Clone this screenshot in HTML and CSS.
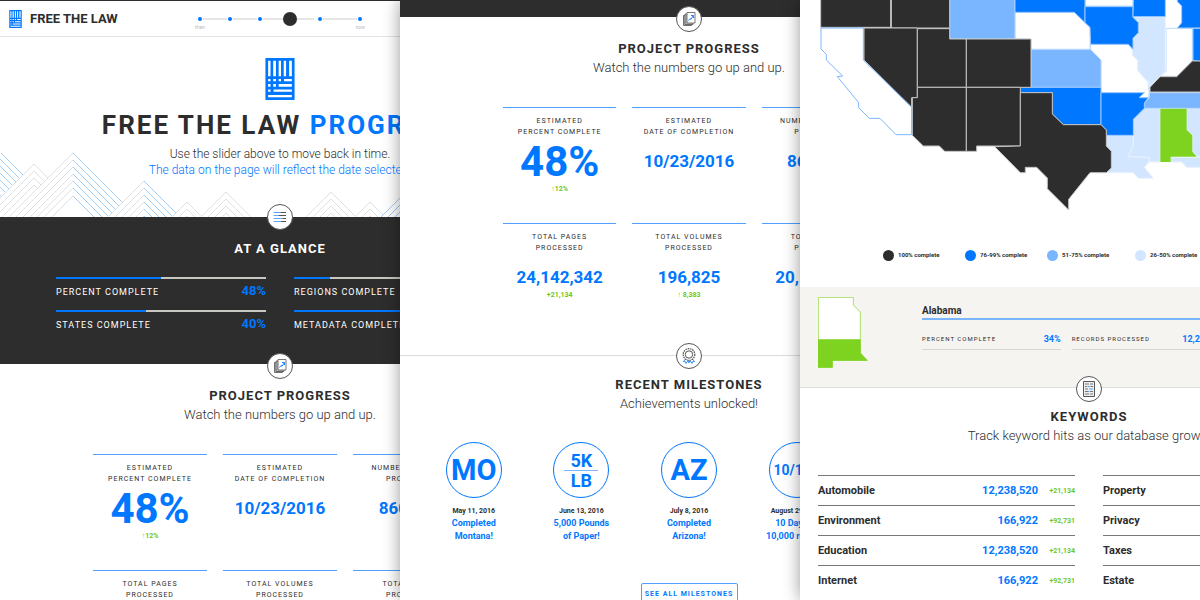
FILE: index.html
```html
<!DOCTYPE html>
<html lang="en">
<head>
<meta charset="utf-8">
<title>Free the Law</title>
<link rel="stylesheet" href="styles.css">
</head>
<body>
<svg class="defs" aria-hidden="true">
  <symbol id="emblem" viewBox="0 0 86 124">
    <rect width="86" height="124" fill="#07f"/>
    <path fill="#fff" d="M8 8h7v46H8zM23 8h8v46h-8zM39 8h7v46h-7zM54 8h7v46h-7zM70 8h8v46h-8zM8 62h7v7H8zM23 62h8v7h-8zM39 62h7v7h-7zM55 62h23v7H55zM8 77h7v8H8zM23 77h8v8h-8zM39 77h39v8H39zM8 93h7v7H8zM24 93h54v7H24zM8 109h70v7H8z"/>
  </symbol>
  <symbol id="pages" viewBox="0 0 26 26">
    <g fill="#bbb" stroke="#555" stroke-width=".8"><path d="M7.5 9.5h8v10h-8z"/><path d="M9 8h8v10.500H9z"/><path fill="#fff" d="M11 6.500h8v10.500h-8z"/></g>
    <path d="M12.500 14.500l1.500-2 1 .8 2.300-3.500M15 9.500h2.500V12" fill="none" stroke="#07f" stroke-width=".9"/>
  </symbol>
  <symbol id="chevrons-left" viewBox="-70 0 140 70">
    <path d="M0 0l-70 70M0 7l-63 63M0 14l-56 56M0 21l-49 49M0 28l-42 42M0 35l-35 35M0 43l-27 27"/>
  </symbol>
  <symbol id="chevrons-right" viewBox="-70 0 140 70">
    <path d="M0 0l70 70M0 7l63 63M0 14l56 56M0 21l49 49M0 28l42 42M0 35l35 35M0 43l27 27"/>
  </symbol>
</svg>

<main class="board">
  <div class="panel">
    <div class="page page-home">
      <header class="topbar">
        <a class="brand" href="#"><svg class="brand-mark" aria-hidden="true"><use href="#emblem"/></svg>FREE THE LAW</a>
        <div class="timeline">
          <svg class="timeline-dots" viewBox="0 0 174 14" aria-hidden="true">
            <path d="M10 7h24M40 7h24M70 7h51M130 7h34" stroke="#ccc"/>
            <g fill="#07f"><circle cx="7" cy="7" r="2"/><circle cx="37" cy="7" r="2"/><circle cx="67" cy="7" r="2"/><circle cx="127" cy="7" r="2"/><circle cx="167" cy="7" r="2"/></g>
          </svg>
          <input type="range" min="0" max="160" value="90" aria-label="Date">
          <div class="timeline-ends"><span>then</span><span>now</span></div>
        </div>
      </header>

      <div class="hero">
        <svg class="hero-mark" aria-hidden="true"><use href="#emblem"/></svg>
        <h1>FREE THE LAW <span>PROGRESS</span></h1>
        <p>Use the slider above to move back in time.<br><span>The data on the page will reflect the date selected.</span></p>
        <svg class="mountains" viewBox="0 0 560 64" preserveAspectRatio="xMinYMax slice" aria-hidden="true">
          <g class="far"><use href="#chevrons-right" x="-80" y="-11" width="140" height="70"/><use href="#chevrons-right" x="-80" y="37" width="140" height="70"/></g>
          <path class="mask" d="M34 11l60 60h-120z"/>
          <g class="near"><use href="#chevrons-left" x="-36" y="11" width="140" height="70"/><use href="#chevrons-right" x="-36" y="11" width="140" height="70"/></g>
          <path class="mask" d="M73 0l70 70H3z"/>
          <g class="near"><use href="#chevrons-left" x="3" y="0" width="140" height="70"/></g>
          <g class="far"><use href="#chevrons-right" x="3" y="0" width="140" height="70"/></g>
          <path class="mask" d="M144 28l42 42h-84z"/>
          <g class="near"><use href="#chevrons-left" x="74" y="28" width="140" height="70"/></g>
          <g class="far"><use href="#chevrons-right" x="74" y="28" width="140" height="70"/></g>
          <path class="mask" d="M187 49l20 20h-40z"/>
          <g class="near"><use href="#chevrons-left" x="117" y="49" width="140" height="70"/><use href="#chevrons-right" x="117" y="49" width="140" height="70"/></g>
          <path class="mask" d="M226 39l30 30h-60z"/>
          <g class="near"><use href="#chevrons-left" x="156" y="39" width="140" height="70"/><use href="#chevrons-right" x="156" y="39" width="140" height="70"/></g>
          <g class="near"><use href="#chevrons-left" x="261" y="39" width="140" height="70"/><use href="#chevrons-right" x="261" y="39" width="140" height="70"/></g>
          <path class="mask" d="M370 49l20 20h-40z"/>
          <g class="near"><use href="#chevrons-left" x="300" y="49" width="140" height="70"/><use href="#chevrons-right" x="300" y="49" width="140" height="70"/></g>
          <path class="mask" d="M422 23l45 45h-90z"/>
          <g class="far"><use href="#chevrons-left" x="352" y="23" width="140" height="70"/><use href="#chevrons-right" x="352" y="23" width="140" height="70"/></g>
        </svg>
      </div>

      <section class="section glance">
        <svg class="badge" viewBox="0 0 26 26" aria-hidden="true"><circle cx="13" cy="13" r="12.500"/><path d="M6.500 8.500h7M6.500 11.500h5M6.500 14.500h9M6.500 17.500h7" stroke="#5aa7ff"/><path d="M13.500 8.500h5.500M11.500 11.500H19M15.500 14.500H19M13.500 17.500H19" stroke="#555"/></svg>
        <h2>AT A GLANCE</h2>
        <div class="meters">
          <div class="meter"><div class="bar"><div style="width:50%"></div></div><div class="meter-row"><span>PERCENT COMPLETE</span><strong>48%</strong></div></div>
          <div class="meter"><div class="bar"><div style="width:17%"></div></div><div class="meter-row"><span>REGIONS COMPLETE</span><strong>17%</strong></div></div>
          <div class="meter"><div class="bar"><div style="width:43%"></div></div><div class="meter-row"><span>STATES COMPLETE</span><strong>40%</strong></div></div>
          <div class="meter"><div class="bar"><div style="width:70%"></div></div><div class="meter-row"><span>METADATA COMPLETE</span><strong>70%</strong></div></div>
        </div>
      </section>

      <section class="section progress">
        <svg class="badge" viewBox="0 0 26 26" aria-hidden="true"><circle cx="13" cy="13" r="12.500"/><use href="#pages"/></svg>
        <h2>PROJECT PROGRESS</h2>
        <p class="lead">Watch the numbers go up and up.</p>
        <div class="stats">
          <div class="stat"><h3>ESTIMATED<br>PERCENT COMPLETE</h3><strong class="huge">48%</strong><span class="delta">↑12%</span></div>
          <div class="stat"><h3>ESTIMATED<br>DATE OF COMPLETION</h3><strong>10/23/2016</strong></div>
          <div class="stat"><h3>NUMBER OF CASES<br>PROCESSED</h3><strong>860,241</strong><span class="delta">↑8,383</span></div>
          <div class="stat"><h3>TOTAL PAGES<br>PROCESSED</h3></div>
          <div class="stat"><h3>TOTAL VOLUMES<br>PROCESSED</h3></div>
          <div class="stat"><h3>TOTAL CASES<br>PROCESSED</h3></div>
        </div>
      </section>
    </div>
  </div>

  <div class="panel">
    <div class="page">
      <div class="strip"></div>
      <section class="section progress">
        <svg class="badge" viewBox="0 0 26 26" aria-hidden="true"><circle cx="13" cy="13" r="12.500"/><use href="#pages"/></svg>
        <h2>PROJECT PROGRESS</h2>
        <p class="lead">Watch the numbers go up and up.</p>
        <div class="stats">
          <div class="stat"><h3>ESTIMATED<br>PERCENT COMPLETE</h3><strong class="huge">48%</strong><span class="delta">↑12%</span></div>
          <div class="stat"><h3>ESTIMATED<br>DATE OF COMPLETION</h3><strong>10/23/2016</strong></div>
          <div class="stat"><h3>NUMBER OF CASES<br>PROCESSED</h3><strong>860,241</strong></div>
          <div class="stat"><h3>TOTAL PAGES<br>PROCESSED</h3><strong>24,142,342</strong><span class="delta">+21,134</span></div>
          <div class="stat"><h3>TOTAL VOLUMES<br>PROCESSED</h3><strong>196,825</strong><span class="delta">↑ 8,383</span></div>
          <div class="stat"><h3>TOTAL CASES<br>PROCESSED</h3><strong>20,142,342</strong></div>
        </div>
      </section>

      <section class="section ruled">
        <svg class="badge" viewBox="0 0 26 26" aria-hidden="true"><circle cx="13" cy="13" r="12.500"/><path d="M9.500 16l-2 2.500 2 .2.500 1.800 2-3M16.500 16l2 2.500-2 .2-.5 1.800-2-3M12.500 18l.5 2 .5-2" fill="none" stroke="#07f" stroke-width=".8"/><circle cx="13" cy="11.500" r="5.800" stroke="#555" stroke-width="1.200" stroke-dasharray="1.600 .7"/><circle cx="13" cy="11.500" r="3.700" stroke="#555"/></svg>
        <h2>RECENT MILESTONES</h2>
        <p class="lead">Achievements unlocked!</p>
        <ul class="milestones">
          <li><div class="medal">MO</div><time>May 11, 2016</time><a href="#">Completed<br>Montana!</a></li>
          <li><div class="medal medal-split"><span>5K</span><span>LB</span></div><time>June 13, 2016</time><a href="#">5,000 Pounds<br>of Paper!</a></li>
          <li><div class="medal">AZ</div><time>July 8, 2016</time><a href="#">Completed<br>Arizona!</a></li>
          <li><div class="medal medal-small">10/10K</div><time>August 29, 2016</time><a href="#">10 Days of<br>10,000 records</a></li>
        </ul>
        <button class="more" type="button">SEE ALL MILESTONES</button>
      </section>
    </div>
  </div>

  <div class="panel">
    <div class="page">
      <svg class="map" viewBox="0 0 1734 660" role="img" aria-label="Map of completion by state">
        <g class="none"><path d="M872 133H985L997 148V165L1013 180V212L1045 246V262L1048 278 1045 293H1015L1033 278H903V180L872 148Z"/><path d="M645 37H823L870 82V148H693V117H645Z"/><path d="M857-5H999V18H857ZM1098 85H1177V183L1130 229H1080L1098 213Z"/></g>
        <g class="pale"><path d="M999 52H1096V212L1048 262 1046 246 1013 212V180L997 165V148L999 115 1015 98V68Z"/><path d="M919 406H1000V438L985 470 1048 472V485L1033 502 1060 535H1015L1000 518H919L934 504V454L919 438Z"/><path d="M1033 325H1081V486H1048V472L985 470 1000 438V358Z"/><path d="M1160 326H1300V470H1190L1177 455V406L1160 390ZM1112 472H1300V502H1160L1145 486H1112Z"/></g>
        <g class="mid"><path d="M449-5H645V117H449Z"/><path d="M693 148H871L903 180V262H693Z"/><path d="M1048 278H1300V325H1033V309L1048 294Z"/></g>
        <g class="high"><path d="M661 262H903V374H790L757 342V278H661Z"/><path d="M645-5H855V68L823 37H645Z"/><path d="M855 20H999V52L1015 68V98L999 115V148L985 133H872L870 82 855 68Z"/><path d="M1000-5H1096V50H999ZM1132-5V5L1145 18V68L1132 84H1300V-5ZM1179 85H1300V190L1179 182Z"/><path d="M903 278H1033L1017 293H1045L1033 309V325L1000 358V406H919V390L903 374Z"/></g>
        <g class="full"><path d="M62-5H272V82H62ZM274-5H449V84H274Z"/><path d="M192 84H352V293H335V322L192 180Z"/><path d="M352 86H449V117H499V262H352Z"/><path d="M499 117H693V262H499Z"/><path d="M352 262H499V454H434L418 438H370L337 406V293H352Z"/><path d="M499 262H661V438H530V454H499Z"/><path d="M661 278H757V342L790 374H903L919 390V438L934 454V504L919 518H870L806 598V630L742 566V534L710 502H676V518H661L584 440 661 438Z"/><path d="M1050 276V262L1080 230H1130L1177 183H1195L1300 200V276Z"/></g>
        <path class="open" d="M63 84H190V180L335 322V404H288L240 355H208L176 323V308L112 230 128 228 79 180V163L63 147Z"/>
        <path fill="#7ed321" d="M1081 326H1160V390L1177 406V455L1190 470H1112V486H1081Z"/>
      </svg>
      <ul class="legend">
        <li><i class="dot-full"></i>100% complete</li>
        <li><i class="dot-high"></i>76-99% complete</li>
        <li><i class="dot-mid"></i>51-75% complete</li>
        <li><i class="dot-pale"></i>26-50% complete</li>
      </ul>

      <div class="state">
        <svg class="state-shape" viewBox="54 186 150 213" aria-hidden="true"><path d="M55 187H160V210L181 231V354L202 376H97V397H55Z" fill="#fff" stroke="#a5e065" stroke-width="3"/><path d="M54 313H182V354L203 377H98V398H54Z" fill="#7ed321"/></svg>
        <div class="state-info">
          <h3>Alabama</h3>
          <dl>
            <div><dt>PERCENT COMPLETE</dt><dd>34%</dd></div>
            <div><dt>RECORDS PROCESSED</dt><dd>12,238</dd></div>
          </dl>
        </div>
      </div>

      <section class="section ruled keywords">
        <svg class="badge" viewBox="0 0 26 26" aria-hidden="true"><circle cx="13" cy="13" r="12.500"/><path d="M7.500 5.500h11v15h-11z" fill="#eee" stroke="#555"/><path d="M9 8h4M14 8h3M9 10.500h2M14.500 10.500H17M9 13h3M9 15.500h3M14 15.500h3M9 18h4M14 18h3" stroke="#777"/><path d="M11.500 10.500h2.500M13 13h4M12 15.500h1.500" stroke="#5aa7ff"/></svg>
        <h2>KEYWORDS</h2>
        <p class="lead">Track keyword hits as our database grows.</p>
        <div class="tables">
          <table>
            <tr><th scope="row">Automobile</th><td>12,238,520</td><td class="delta">+21,134</td></tr>
            <tr><th scope="row">Environment</th><td>166,922</td><td class="delta">+92,731</td></tr>
            <tr><th scope="row">Education</th><td>12,238,520</td><td class="delta">+21,134</td></tr>
            <tr><th scope="row">Internet</th><td>166,922</td><td class="delta">+92,731</td></tr>
          </table>
          <table>
            <tr><th scope="row">Property</th></tr>
            <tr><th scope="row">Privacy</th></tr>
            <tr><th scope="row">Taxes</th></tr>
            <tr><th scope="row">Estate</th></tr>
          </table>
        </div>
      </section>
    </div>
  </div>
</main>
</body>
</html>
```
FILE: styles.css
```css
:root {
  --ink: #2d2d2d;
  --blue: #07f;
  --mid: #7ab6ff;
  --pale: #d2e6ff;
  --green: #6fc81a;
}
* { box-sizing: border-box; }
body { margin: 0; font-family: Roboto, "Liberation Sans", sans-serif; color: var(--ink); background: #fff; }
h1, h2, h3, p, ul, dl, dd { margin: 0; padding: 0; }
ul { list-style: none; }
a { color: inherit; text-decoration: none; }
.defs { display: none; }

.board { display: grid; grid-template-columns: repeat(3, minmax(0, 1fr)); height: 100vh; overflow: hidden; }
.panel { position: relative; overflow: hidden; background: #fff; box-shadow: 0 0 16px rgba(0, 0, 0, .4); }
.page { width: 144.5%; }
.page-home { width: 140%; border-top: 1px solid var(--ink); }

.topbar { display: flex; align-items: center; height: 36px; padding-left: 9px; border-bottom: 1px solid #e2e2e2; }
.brand { display: flex; align-items: center; gap: 8px; width: 184px; font-size: 13px; font-weight: 700; white-space: nowrap; }
.brand-mark { width: 13px; height: 18px; }
.timeline { position: relative; width: 174px; height: 14px; }
.timeline-dots { display: block; width: 174px; height: 14px; }
.timeline input { position: absolute; inset: 0; width: 100%; height: 14px; margin: 0; appearance: none; background: none; }
.timeline input::-webkit-slider-thumb { appearance: none; width: 14px; height: 14px; border-radius: 50%; background: var(--ink); }
.timeline-ends { display: flex; justify-content: space-between; margin-top: -2px; padding: 0 2px; font-size: 5px; line-height: 6px; color: #bbb; }

.hero { position: relative; height: 180px; padding-top: 21px; text-align: center; white-space: nowrap; }
.hero-mark { display: block; width: 30px; height: 42px; margin: 0 auto; }
.hero h1 { margin-top: 8px; font-size: 26px; line-height: 34px; letter-spacing: 2px; }
.hero h1 span, .hero p span { color: var(--blue); }
.hero p { position: relative; z-index: 1; margin-top: 4px; font-size: 12px; line-height: 16px; font-weight: 300; }
.mountains { position: absolute; left: 0; bottom: 0; width: 100%; height: 64px; fill: none; }
.mountains .near { stroke: #dde1e4; }
.mountains .far { stroke: #9fcdf5; }
.mountains .mask { fill: #fff; }

.section { position: relative; text-align: center; }
.section h2 { font-size: 13px; line-height: 16px; letter-spacing: 1px; }
.lead { margin-top: 1px; font-size: 13px; line-height: 20px; font-weight: 300; white-space: nowrap; }
.badge { position: absolute; z-index: 1; top: 0; left: 50%; width: 26px; height: 26px; transform: translate(-50%, -50%); }
.badge > circle:first-of-type { fill: #fff; stroke: #555; stroke-width: 1; }
.badge > circle + path ~ circle { fill: #fff; }
.ruled { padding-top: 21px; border-top: 1px solid #dcdcdc; }
.strip { height: 17px; background: var(--ink); }

.glance { height: 147px; padding: 24px 56px 0; background: var(--ink); color: #fff; }
.meters { display: grid; grid-template-columns: 1fr 1fr; gap: 5px 28px; margin-top: 20px; }
.bar { height: 2px; background: #c9c7c2; }
.bar div { height: 100%; background: var(--blue); }
.meter-row { display: flex; justify-content: space-between; line-height: 26px; font-size: 9px; letter-spacing: 1px; }
.meter-row strong { font-size: 13px; letter-spacing: 0; line-height: 24px; color: var(--blue); }

.progress { padding-top: 24px; padding-bottom: 16px; }
.progress .badge { top: 2px; }
.stats { display: grid; grid-template-columns: repeat(3, 1fr); grid-auto-rows: 116px; column-gap: 16px; margin: 29px 103px 0; }
.page-home .stats { margin: 29px 93px 0; }
.stat { display: flex; flex-direction: column; align-items: center; }
.stat::before { content: ""; width: 100%; height: 1px; background: #4fa0ff; }
.stat h3 { margin-top: 8px; font-size: 7px; font-weight: 400; line-height: 11px; letter-spacing: 1px; white-space: nowrap; }
.stat strong { margin-top: 12px; font-size: 17px; line-height: 22px; color: var(--blue); }
.stat .huge { margin-top: 6px; margin-bottom: 2px; font-size: 42px; line-height: 36px; }
.delta { font-size: 7px; font-weight: 700; line-height: 14px; color: var(--green); white-space: nowrap; }

.milestones { display: grid; grid-template-columns: repeat(5, 1fr); margin: 28px 20px 0; }
.milestones li { display: flex; flex-direction: column; align-items: center; white-space: nowrap; }
.medal { display: flex; flex-direction: column; align-items: center; justify-content: center; width: 56px; height: 56px; border: 1px solid var(--blue); border-radius: 50%; font-size: 29px; font-weight: 700; color: var(--blue); }
.medal-split { font-size: 18px; line-height: 19px; }
.medal-split span + span { width: 34px; border-top: 1px solid var(--mid); }
.medal-small { font-size: 14px; }
.milestones time { margin-top: 7px; font-size: 7px; font-weight: 700; line-height: 12px; }
.milestones a { font-size: 9px; font-weight: 700; line-height: 13px; color: var(--blue); }
.more { width: 97px; height: 21px; margin-top: 40px; padding: 0; border: 1px solid #4fa0ff; border-radius: 2px; background: #fff; font: 700 7px Roboto, sans-serif; letter-spacing: 1px; color: var(--blue); white-space: nowrap; }

.map { display: block; width: 100%; height: auto; stroke-width: 3; stroke-linejoin: miter; }
.map .none { fill: #fff; stroke: #bcdcff; }
.map .pale { fill: var(--pale); stroke: #e9f3ff; }
.map .mid { fill: var(--mid); stroke: #bcdcff; }
.map .high { fill: var(--blue); stroke: #9cc9ff; }
.map .full { fill: var(--ink); stroke: #c4c4c4; }
.map .open { fill: #fff; stroke: var(--mid); }
.legend { display: grid; grid-template-columns: 82px 82px 88px 82px; height: 67px; padding: 29px 0 0 83px; font-size: 6px; font-weight: 700; line-height: 12px; white-space: nowrap; }
.legend li { display: flex; align-items: center; gap: 4px; height: 12px; }
.legend i { width: 11px; height: 11px; border-radius: 50%; }
.dot-full { background: var(--ink); }
.dot-high { background: var(--blue); }
.dot-mid { background: var(--mid); }
.dot-pale { background: var(--pale); }

.state { display: flex; gap: 54px; height: 100px; padding: 10px 18px 0; background: #f6f4f0; }
.state-shape { flex: none; width: 50px; height: 71px; }
.state-info { flex: 1; padding-top: 7px; }
.state h3 { font-size: 10px; line-height: 14px; border-bottom: 2px solid var(--mid); }
.state dl { display: grid; grid-template-columns: repeat(3, 1fr); gap: 11px; margin-top: 9px; }
.state dl div { display: flex; justify-content: space-between; border-bottom: 1px solid #d8d6d2; line-height: 20px; white-space: nowrap; }
.state dt { font-size: 6px; letter-spacing: 1px; }
.state dd { font-size: 9px; font-weight: 700; color: var(--blue); }

.keywords .badge { top: 1px; }
.tables { display: grid; grid-template-columns: 1fr 1fr; gap: 28px; margin: 29px 18px 0; }
table { width: 100%; border-collapse: collapse; }
tr { border-top: 1px solid #777; }
th, td { height: 30px; padding: 0; }
th { text-align: left; font-size: 11px; }
td { text-align: right; font-size: 11px; font-weight: 700; color: var(--blue); }
td.delta { width: 37px; font-size: 7px; color: var(--green); }
```
